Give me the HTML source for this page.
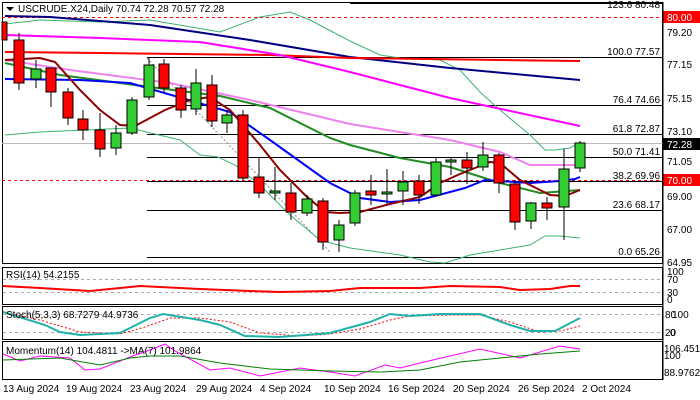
<!DOCTYPE html>
<html><head><meta charset="utf-8"><style>
html,body{margin:0;padding:0;background:#fff;}
svg{display:block;font-family:"Liberation Sans",sans-serif;}
text{font-size:10px;fill:#000;}
</style></head><body>
<svg width="700" height="400" viewBox="0 0 700 400" xmlns="http://www.w3.org/2000/svg">
<rect width="700" height="400" fill="#fff"/>
<rect x="2.5" y="2.5" width="660" height="261" fill="none" stroke="#000"/>
<g stroke="#000" stroke-width="1">
<line x1="350" y1="3.5" x2="663" y2="3.5"/>
<line x1="147" y1="57.5" x2="663" y2="57.5"/>
<line x1="147" y1="105.5" x2="663" y2="105.5"/>
<line x1="147" y1="134.5" x2="663" y2="134.5"/>
<line x1="147" y1="157.5" x2="663" y2="157.5"/>
<line x1="147" y1="181.5" x2="663" y2="181.5"/>
<line x1="147" y1="210.5" x2="663" y2="210.5"/>
<line x1="147" y1="257.5" x2="663" y2="257.5"/>
</g>
<line x1="2" y1="143.5" x2="663" y2="143.5" stroke="#bbb"/>
<line x1="2" y1="17.5" x2="663" y2="17.5" stroke="#f00" stroke-dasharray="3,3"/>
<line x1="2" y1="180.5" x2="663" y2="180.5" stroke="#f00" stroke-dasharray="3,3"/>
<line x1="147" y1="58" x2="330" y2="252" stroke="#888" stroke-dasharray="2,2"/>
<g text-anchor="end">
<text x="660" y="8">123.6 80.48</text>
<text x="660" y="55">100.0 77.57</text>
<text x="660" y="103">76.4 74.66</text>
<text x="660" y="132">61.8 72.87</text>
<text x="660" y="155">50.0 71.41</text>
<text x="660" y="179">38.2 69.96</text>
<text x="660" y="208">23.6 68.17</text>
<text x="660" y="255">0.0 65.26</text>
</g>
<g fill="none" stroke="#3cb371" stroke-width="1">
<polyline points="5,24 40,20 100,22 150,20 220,32 260,17 290,12 310,20 350,41 380,55 400,58 440,60 460,70 480,92 500,110 530,135 545,150 555,150 570,148 580,142"/>
<polyline points="5,135 40,132 130,128 180,140 200,155 218,157 235,165 260,185 290,215 320,240 350,248 400,255 430,262 445,263 470,255 530,245 545,236 560,236 580,238"/>
</g>
<g fill="none" stroke-width="2">
<polyline stroke="#000080" points="5,16 50,17 150,25 250,40 350,57 450,68 580,80"/>
<polyline stroke="#f00" points="5,52 100,53 270,55 350,58 500,60 580,61"/>
<polyline stroke="#f0f" points="5,35 100,38 200,42 280,55 350,72 450,98 580,126"/>
<polyline stroke="#ee82ee" points="5,60 70,70 170,83 250,100 300,112 350,124 450,140 500,152 530,165 580,165"/>
<polyline stroke="#228b22" points="5,63 60,75 150,87 220,96 270,108 330,138 350,145 400,158 450,167 500,183 540,193 580,190"/>
<polyline stroke="#00f" points="5,79 80,80 130,83 230,112 270,140 330,183 360,198 390,202 420,200 465,188 485,180 500,181 530,183 560,181 575,179 580,177"/>
<polyline stroke="#8b0000" points="5,60 40,58 55,62 80,90 100,110 120,125 135,126 165,110 190,100 210,97 230,110 260,145 280,170 305,195 325,212 340,213 360,212 390,204 420,197 440,183 460,174 490,162 500,163 520,180 550,195 565,196 580,190"/>
</g>
<g stroke="#000" stroke-width="1">
<line x1="19" y1="33" x2="19" y2="90"/><rect x="14" y="40" width="10" height="43" fill="#f00"/>
<rect x="2" y="22" width="5" height="18" fill="#f00"/>
<line x1="36" y1="60" x2="36" y2="88"/><rect x="31" y="69" width="10" height="10" fill="#32cd32"/>
<line x1="51" y1="68" x2="51" y2="107"/><rect x="46" y="68" width="10" height="24" fill="#f00"/>
<line x1="68" y1="88" x2="68" y2="125"/><rect x="63" y="92" width="10" height="26" fill="#f00"/>
<line x1="83" y1="110" x2="83" y2="140"/><rect x="78" y="119" width="10" height="11" fill="#f00"/>
<line x1="100" y1="113" x2="100" y2="157"/><rect x="95" y="130" width="10" height="19" fill="#f00"/>
<line x1="116" y1="125" x2="116" y2="155"/><rect x="111" y="133" width="10" height="15" fill="#32cd32"/>
<line x1="132" y1="97" x2="132" y2="135"/><rect x="127" y="100" width="10" height="33" fill="#32cd32"/>
<line x1="149" y1="58" x2="149" y2="100"/><rect x="144" y="65" width="10" height="32" fill="#32cd32"/>
<line x1="164" y1="59" x2="164" y2="93"/><rect x="159" y="64" width="10" height="24" fill="#f00"/>
<line x1="181" y1="85" x2="181" y2="118"/><rect x="176" y="88" width="10" height="22" fill="#f00"/>
<line x1="196" y1="69" x2="196" y2="115"/><rect x="191" y="83" width="10" height="26" fill="#32cd32"/>
<line x1="212" y1="75" x2="212" y2="127"/><rect x="207" y="85" width="10" height="36" fill="#f00"/>
<line x1="227" y1="110" x2="227" y2="133"/><rect x="222" y="115" width="10" height="8" fill="#32cd32"/>
<line x1="243" y1="110" x2="243" y2="180"/><rect x="238" y="115" width="10" height="63" fill="#f00"/>
<line x1="259" y1="158" x2="259" y2="198"/><rect x="254" y="177" width="10" height="16" fill="#f00"/>
<line x1="275" y1="167" x2="275" y2="200"/><rect x="270" y="191" width="10" height="2" fill="#32cd32"/>
<line x1="291" y1="183" x2="291" y2="220"/><rect x="286" y="193" width="10" height="19" fill="#f00"/>
<line x1="307" y1="195" x2="307" y2="216"/><rect x="302" y="199" width="10" height="14" fill="#32cd32"/>
<line x1="323" y1="198" x2="323" y2="250"/><rect x="318" y="201" width="10" height="41" fill="#f00"/>
<line x1="339" y1="220" x2="339" y2="252"/><rect x="334" y="225" width="10" height="15" fill="#32cd32"/>
<line x1="355" y1="190" x2="355" y2="226"/><rect x="350" y="193" width="10" height="30" fill="#32cd32"/>
<line x1="371" y1="175" x2="371" y2="205"/><rect x="366" y="191" width="10" height="4" fill="#f00"/>
<line x1="387" y1="169" x2="387" y2="204"/><rect x="382" y="192" width="10" height="2" fill="#32cd32"/>
<line x1="403" y1="171" x2="403" y2="205"/><rect x="398" y="182" width="10" height="9" fill="#32cd32"/>
<line x1="419" y1="175" x2="419" y2="204"/><rect x="414" y="181" width="10" height="14" fill="#f00"/>
<line x1="436" y1="157" x2="436" y2="196"/><rect x="431" y="162" width="10" height="33" fill="#32cd32"/>
<line x1="451" y1="158" x2="451" y2="175"/><rect x="446" y="160" width="10" height="2" fill="#32cd32"/>
<line x1="467" y1="152" x2="467" y2="184"/><rect x="462" y="160" width="10" height="8" fill="#f00"/>
<line x1="483" y1="142" x2="483" y2="171"/><rect x="478" y="155" width="10" height="12" fill="#32cd32"/>
<line x1="499" y1="153" x2="499" y2="193"/><rect x="494" y="155" width="10" height="28" fill="#f00"/>
<line x1="515" y1="180" x2="515" y2="230"/><rect x="510" y="184" width="10" height="38" fill="#f00"/>
<line x1="531" y1="202" x2="531" y2="229"/><rect x="526" y="203" width="10" height="18" fill="#32cd32"/>
<line x1="547" y1="197" x2="547" y2="220"/><rect x="542" y="203" width="10" height="5" fill="#f00"/>
<line x1="564" y1="149" x2="564" y2="240"/><rect x="559" y="169" width="10" height="38" fill="#32cd32"/>
<line x1="580" y1="141" x2="580" y2="172"/><rect x="575" y="143" width="10" height="25" fill="#32cd32"/>
</g>
<polygon points="6,7 14,7 10,11" fill="#000"/>
<text x="18" y="12">USCRUDE.X24,Daily  70.74 72.28 70.57 72.28</text>
<g font-size="10">
<text x="667" y="36">79.20</text>
<text x="667" y="68">77.15</text>
<text x="667" y="102">75.15</text>
<text x="667" y="135">73.10</text>
<text x="667" y="165">71.05</text>
<text x="667" y="200">69.00</text>
<text x="667" y="233">67.00</text>
<text x="667" y="266">64.95</text>
</g>
<rect x="663" y="11" width="37" height="12" fill="#f00"/><text x="667" y="21" style="fill:#fff">80.00</text>
<rect x="663" y="174" width="37" height="12" fill="#f00"/><text x="667" y="184" style="fill:#fff">70.00</text>
<rect x="663" y="138" width="37" height="12" fill="#000"/><text x="667" y="148" style="fill:#fff">72.28</text>
<rect x="2.5" y="267.5" width="660" height="37" fill="none" stroke="#000"/>
<line x1="3" y1="279.5" x2="662" y2="279.5" stroke="#aaa" stroke-dasharray="3,3"/>
<line x1="3" y1="292.5" x2="662" y2="292.5" stroke="#aaa" stroke-dasharray="3,3"/>
<text x="6" y="278">RSI(14) 54.2155</text>
<polyline fill="none" stroke="#f00" stroke-width="2" points="3,286 40,288 90,291 120,288 140,286 200,289 250,291 280,292 330,291 360,288 420,288 450,286 500,287 520,290 550,289 570,286 580,286"/>
<text x="667" y="275" font-size="9">100</text><text x="667" y="283" font-size="9">70</text>
<text x="667" y="296" font-size="9">30</text><text x="667" y="303" font-size="9">0</text>
<rect x="2.5" y="306.5" width="660" height="33" fill="none" stroke="#000"/>
<line x1="3" y1="314.5" x2="662" y2="314.5" stroke="#aaa" stroke-dasharray="3,3"/>
<line x1="3" y1="332.5" x2="662" y2="332.5" stroke="#aaa" stroke-dasharray="3,3"/>
<polyline fill="none" stroke="#f00" stroke-dasharray="2,2" points="3,312 40,320 80,332 120,334 145,327 170,318 200,318 230,322 260,333 300,336 330,334 360,329 390,320 410,316 450,315 480,315 510,322 540,332 560,331 580,326"/>
<polyline fill="none" stroke="#20b2aa" stroke-width="2" points="3,312 45,325 60,332 80,335 120,333 130,328 150,318 163,314 200,320 220,325 245,336 280,337 330,333 370,322 390,314 410,316 440,314 480,314 510,325 530,331 555,331 580,318"/>
<text x="6" y="318">Stoch(5,3,3) 68.7279 44.9736</text>
<text x="665" y="318" font-size="9">80</text><text x="672" y="318" font-size="9">100</text>
<text x="665" y="336" font-size="9">20</text><text x="670" y="336" font-size="9">0</text>
<rect x="2.5" y="341.5" width="660" height="38" fill="none" stroke="#000"/>
<polyline fill="none" stroke="#f0f" points="3,354 20,361 40,356 70,358 85,370 100,369 130,357 150,350 165,344 175,351 210,370 230,368 260,376 300,368 330,372 355,376 385,365 400,368 420,363 480,349 520,358 560,346 580,349"/>
<polyline fill="none" stroke="#008000" points="3,360 60,358 100,365 130,358 150,356 180,356 220,363 270,369 330,371 380,372 420,370 460,362 500,358 540,354 580,351"/>
<text x="6" y="354">Momentum(14) 104.4811  -&gt;MA(7) 101.9864</text>
<text x="664" y="352" font-size="9">106.4519</text>
<text x="664" y="359" font-size="9">100</text>
<text x="664" y="376" font-size="9">88.9762</text>
<line x1="663" y1="2" x2="663" y2="380" stroke="#000"/>
<g font-size="9.5">
<text x="3" y="392">13 Aug 2024</text>
<text x="66" y="392">19 Aug 2024</text>
<text x="130" y="392">23 Aug 2024</text>
<text x="196" y="392">29 Aug 2024</text>
<text x="260" y="392">4 Sep 2024</text>
<text x="324" y="392">10 Sep 2024</text>
<text x="388" y="392">16 Sep 2024</text>
<text x="453" y="392">20 Sep 2024</text>
<text x="518" y="392">26 Sep 2024</text>
<text x="582" y="392">2 Oct 2024</text>
</g>
</svg>
</body></html>
